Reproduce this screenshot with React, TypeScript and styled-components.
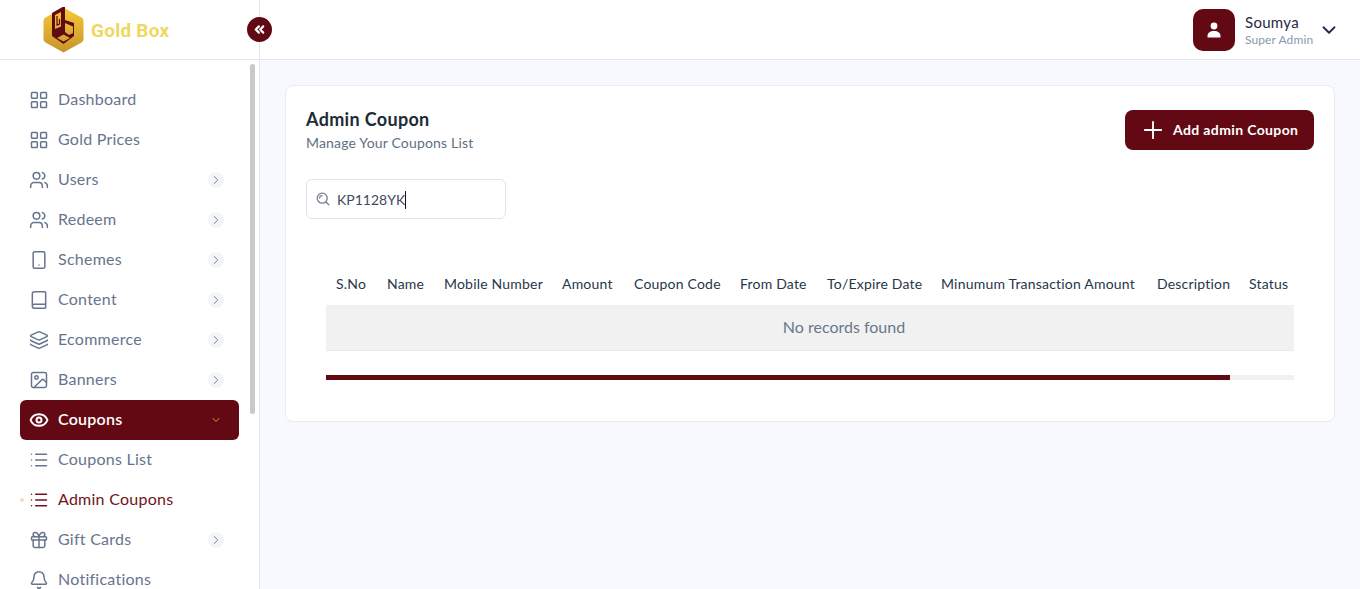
import styled, { createGlobalStyle } from 'styled-components';
import type { ReactNode } from 'react';
import {
  Bell,
  Book,
  ChevronDown,
  ChevronRight,
  ChevronsLeft,
  Eye,
  Gift,
  Image,
  Layers,
  LayoutGrid,
  List,
  Plus,
  Smartphone,
  Users,
} from 'lucide-react';

const MAROON = '#620914';
const FONT = '"Lato", "Noto Sans", sans-serif';

const GlobalStyle = createGlobalStyle`
  html, body {
    margin: 0;
    height: 100%;
    overflow: hidden;
    background: #f8f9fe;
    font-family: ${FONT};
  }
  * { box-sizing: border-box; }
`;

const Page = styled.div`
  position: relative;
  display: grid;
  grid-template-columns: 260px 1fr;
  height: 589px;
  overflow: hidden;
`;

const Sidebar = styled.aside`
  position: relative;
  display: flex;
  flex-direction: column;
  height: 589px;
  background: #fff;
  border-right: 1px solid #e3e5ea;
`;

const LogoBar = styled.div`
  display: flex;
  align-items: center;
  gap: 7px;
  flex: 0 0 60px;
  padding-left: 43px;
  border-bottom: 1px solid #e3e5ea;
`;

const LogoText = styled.span`
  margin-top: 2px;
  font-family: Roboto, sans-serif;
  font-size: 19px;
  font-weight: 700;
  letter-spacing: 0.25px;
  color: #eed85e;
`;

const CollapseButton = styled.button`
  position: absolute;
  left: 247px;
  top: 17px;
  display: flex;
  align-items: center;
  justify-content: center;
  width: 25px;
  height: 25px;
  padding: 0;
  border: 0;
  border-radius: 50%;
  background: ${MAROON};
  color: #fff;
`;

const Nav = styled.nav`
  flex: 1;
  padding: 20px 0 0 20px;
  overflow: hidden;
`;

const NavScrollThumb = styled.div`
  position: absolute;
  left: 250px;
  top: 64px;
  width: 5px;
  height: 350px;
  border-radius: 3px;
  background: #c9c9c9;
`;

const MenuRow = styled.div<{ $active?: boolean; $current?: boolean }>`
  position: relative;
  display: flex;
  align-items: center;
  width: 219px;
  height: 40px;
  padding: 0 15px 0 10px;
  border-radius: 6px;
  font-size: 16px;
  letter-spacing: 0.25px;
  font-weight: ${p => (p.$active ? 600 : 400)};
  background: ${p => (p.$active ? MAROON : 'transparent')};
  color: ${p => (p.$active ? '#fff' : p.$current ? '#6f1420' : '#67748e')};

  svg {
    flex-shrink: 0;
  }
`;

const MenuIcon = styled.span`
  display: flex;
  align-items: center;
  justify-content: center;
  flex: 0 0 18px;
  width: 18px;
  margin-right: 10px;
`;

const MenuLabel = styled.span`
  flex: 1;
  margin-bottom: 4px;
`;

const ChevronBadge = styled.span`
  display: flex;
  align-items: center;
  justify-content: center;
  width: 16px;
  height: 16px;
  border-radius: 50%;
  background: #f4f5f8;
  color: #67748e;
`;

const OpenChevron = styled.span`
  display: flex;
  justify-content: center;
  width: 16px;
  color: #e8963c;
`;

const CurrentDot = styled.span`
  position: absolute;
  left: 0;
  top: 18px;
  width: 4px;
  height: 4px;
  border-radius: 50%;
  background: #fdd9b5;
`;

const Main = styled.main`
  display: flex;
  flex-direction: column;
  min-width: 0;
`;

const TopBar = styled.header`
  display: flex;
  align-items: center;
  justify-content: flex-end;
  flex: 0 0 60px;
  padding: 0 20px 0 0;
  background: #fff;
  border-bottom: 1px solid #e3e5ea;
`;

const Avatar = styled.div`
  display: flex;
  align-items: center;
  justify-content: center;
  width: 42px;
  height: 42px;
  margin-right: 10px;
  border-radius: 10px;
  background: ${MAROON};
`;

const UserText = styled.div`
  display: flex;
  flex-direction: column;
  width: 73px;
`;

const UserName = styled.span`
  font-size: 15px;
  line-height: 20px;
  letter-spacing: 0.3px;
  color: #1f2a44;
`;

const UserRole = styled.span`
  font-size: 12px;
  line-height: 16px;
  letter-spacing: 0.1px;
  color: #8a99ad;
`;

const Content = styled.div`
  padding: 25px 25px 0;
`;

const Card = styled.section`
  height: 337px;
  padding: 20px;
  background: #fff;
  border: 1px solid #e9ebef;
  border-radius: 8px;
`;

const CardHead = styled.div`
  display: flex;
  align-items: flex-start;
  justify-content: space-between;
  height: 73px;
`;

const Title = styled.h1`
  margin: 0;
  font-size: 18px;
  font-weight: 700;
  line-height: 26px;
  letter-spacing: 0.33px;
  color: #212b36;
`;

const Subtitle = styled.p`
  margin: 0;
  font-size: 14px;
  line-height: 22px;
  letter-spacing: 0.17px;
  color: #5f6f80;
`;

const AddButton = styled.button`
  display: flex;
  align-items: center;
  gap: 6px;
  width: 189px;
  height: 40px;
  margin-top: 4px;
  padding: 0 0 0 14px;
  border: 0;
  border-radius: 8px;
  background: ${MAROON};
  color: #fff;
  font-family: ${FONT};
  font-size: 14px;
  font-weight: 700;
  letter-spacing: 0.37px;
`;

const AddLabel = styled.span`
  margin-bottom: 2px;
`;

const SearchBox = styled.label`
  position: relative;
  display: flex;
  align-items: center;
  gap: 7px;
  width: 200px;
  height: 40px;
  padding: 0 9px;
  border: 1px solid #dfe2e7;
  border-radius: 6px;
`;

const SearchInput = styled.input`
  flex: 1;
  min-width: 0;
  padding: 0;
  border: 0;
  outline: 0;
  font-family: ${FONT};
  font-size: 14px;
  color: #3d4c60;
`;

const Caret = styled.span`
  position: absolute;
  left: 98px;
  top: 11px;
  width: 1px;
  height: 18px;
  background: #111;
`;

const TableWrap = styled.div`
  width: 968px;
  margin: 43px 0 0 20px;
  overflow: hidden;
`;

const Table = styled.table`
  width: 1036px;
  table-layout: fixed;
  border-collapse: collapse;
`;

const Th = styled.th<{ $width: number }>`
  width: ${p => p.$width}px;
  height: 43px;
  padding: 0 0 0 10px;
  border-bottom: 1px solid #eef0f2;
  font-size: 14px;
  font-weight: 400;
  letter-spacing: 0.2px;
  text-align: left;
  white-space: nowrap;
  color: #27364b;
`;

const EmptyCell = styled.td`
  height: 45px;
  padding: 0 0 2px;
  background: #f1f1f1;
  border-bottom: 1px solid #eaeaea;
  font-size: 16px;
  text-align: center;
  color: #67788a;
`;

const ScrollTrack = styled.div`
  width: 968px;
  height: 5px;
  margin: 24px 0 0 20px;
  background: #f1f1f1;
`;

const ScrollThumb = styled.div`
  height: 100%;
  background: ${MAROON};
`;

type MenuEntry = {
  label: string;
  icon: ReactNode;
  sub?: boolean;
  active?: boolean;
  current?: boolean;
};

const iconProps = { size: 20, strokeWidth: 1.8 };

const menu: MenuEntry[] = [
  { label: 'Dashboard', icon: <LayoutGrid {...iconProps} /> },
  { label: 'Gold Prices', icon: <LayoutGrid {...iconProps} /> },
  { label: 'Users', icon: <Users {...iconProps} />, sub: true },
  { label: 'Redeem', icon: <Users {...iconProps} />, sub: true },
  { label: 'Schemes', icon: <Smartphone {...iconProps} />, sub: true },
  { label: 'Content', icon: <Book {...iconProps} />, sub: true },
  { label: 'Ecommerce', icon: <Layers {...iconProps} />, sub: true },
  { label: 'Banners', icon: <Image {...iconProps} />, sub: true },
  { label: 'Coupons', icon: <Eye {...iconProps} strokeWidth={2.4} />, active: true },
  { label: 'Coupons List', icon: <List {...iconProps} /> },
  { label: 'Admin Coupons', icon: <List {...iconProps} />, current: true },
  { label: 'Gift Cards', icon: <Gift {...iconProps} />, sub: true },
  { label: 'Notifications', icon: <Bell {...iconProps} /> },
];

const columns = [
  { label: 'S.No', width: 51 },
  { label: 'Name', width: 57 },
  { label: 'Mobile Number', width: 118 },
  { label: 'Amount', width: 72 },
  { label: 'Coupon Code', width: 106 },
  { label: 'From Date', width: 87 },
  { label: 'To/Expire Date', width: 114 },
  { label: 'Minumum Transaction Amount', width: 216 },
  { label: 'Description', width: 92 },
  { label: 'Status', width: 123 },
];

// the table is wider than its box, the thumb shows how much of it fits
const thumbShare = 968 / 1036.5;

const GoldBoxLogo = () => (
  <svg width="41" height="46" viewBox="0 0 41 46" aria-hidden="true">
    <defs>
      <linearGradient id="gold" x1="0" y1="0" x2="0" y2="1">
        <stop offset="0" stopColor="#f6c935" />
        <stop offset="1" stopColor="#c7932b" />
      </linearGradient>
    </defs>
    <path
      d="M20.5 0.5 38.5 10.5Q40.5 11.6 40.5 14V32Q40.5 34.4 38.5 35.5L20.5 45.5 2.5 35.5Q0.5 34.4 0.5 32V14Q0.5 11.6 2.5 10.5Z"
      fill="url(#gold)"
    />
    <path
      fill="#620914"
      fillRule="evenodd"
      d="M9 6 19.5 0H22V13L31 16V29L20.5 37 9 29ZM12 8V22L18 19.5V5ZM22 16V25L26 28 30 26V19.5ZM14 31 20.5 34.5 27 31 20.5 27.5Z"
    />
    <path d="M14 9V18L16.5 17V12" fill="none" stroke="#620914" strokeWidth="1.2" />
  </svg>
);

const SearchGlyph = () => (
  <svg width="14" height="14" viewBox="0 0 14 14" fill="none" stroke="#76808d" strokeWidth="1.3" strokeLinecap="round" aria-hidden="true">
    <circle cx="6.2" cy="6.2" r="5" />
    <path d="M3.6 6a2.6 2.6 0 0 1 2.4-2.4" />
    <path d="M10 10l2.8 2.8" />
  </svg>
);

const PersonGlyph = () => (
  <svg width="16" height="16" viewBox="0 0 16 16" fill="#fff" aria-hidden="true">
    <circle cx="8" cy="4" r="3.4" />
    <path d="M1.5 15.5v-1.5C1.5 11 4 9 8 9s6.5 2 6.5 5v1.5Z" />
  </svg>
);

export default function App() {
  return (
    <>
      <GlobalStyle />
      <Page>
        <Sidebar>
          <LogoBar>
            <GoldBoxLogo />
            <LogoText>Gold Box</LogoText>
          </LogoBar>
          <Nav>
            {menu.map(item => (
              <MenuRow key={item.label} $active={item.active} $current={item.current}>
                {item.current && <CurrentDot />}
                <MenuIcon>{item.icon}</MenuIcon>
                <MenuLabel>{item.label}</MenuLabel>
                {item.sub && (
                  <ChevronBadge>
                    <ChevronRight size={14} strokeWidth={1.6} />
                  </ChevronBadge>
                )}
                {item.active && (
                  <OpenChevron>
                    <ChevronDown size={12} strokeWidth={2} />
                  </OpenChevron>
                )}
              </MenuRow>
            ))}
          </Nav>
          <NavScrollThumb />
        </Sidebar>
        <CollapseButton aria-label="Collapse sidebar">
          <ChevronsLeft size={15} strokeWidth={3.4} />
        </CollapseButton>
        <Main>
          <TopBar>
            <Avatar>
              <PersonGlyph />
            </Avatar>
            <UserText>
              <UserName>Soumya</UserName>
              <UserRole>Super Admin</UserRole>
            </UserText>
            <ChevronDown size={22} strokeWidth={2} color="#1f2a44" />
          </TopBar>
          <Content>
            <Card>
              <CardHead>
                <div>
                  <Title>Admin Coupon</Title>
                  <Subtitle>Manage Your Coupons List</Subtitle>
                </div>
                <AddButton>
                  <Plus size={28} strokeWidth={1.6} />
                  <AddLabel>Add admin Coupon</AddLabel>
                </AddButton>
              </CardHead>
              <SearchBox>
                <SearchGlyph />
                <SearchInput defaultValue="KP1128YK" />
                <Caret />
              </SearchBox>
              <TableWrap>
                <Table>
                  <thead>
                    <tr>
                      {columns.map(col => (
                        <Th key={col.label} $width={col.width}>
                          {col.label}
                        </Th>
                      ))}
                    </tr>
                  </thead>
                  <tbody>
                    <tr>
                      <EmptyCell colSpan={columns.length}>No records found</EmptyCell>
                    </tr>
                  </tbody>
                </Table>
              </TableWrap>
              <ScrollTrack>
                <ScrollThumb style={{ width: `${thumbShare * 100}%` }} />
              </ScrollTrack>
            </Card>
          </Content>
        </Main>
      </Page>
    </>
  );
}
